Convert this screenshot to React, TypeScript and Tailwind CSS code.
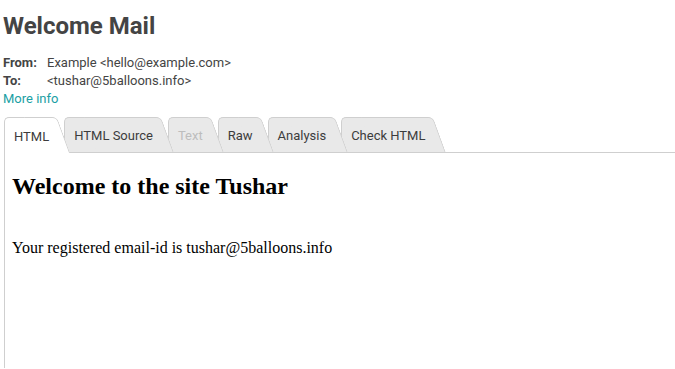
const TABS = [
  { label: "HTML", active: true, z: "z-[16]" },
  { label: "HTML Source", z: "z-[15]" },
  { label: "Text", disabled: true, z: "z-[14]" },
  { label: "Raw", z: "z-[13]" },
  { label: "Analysis", z: "z-[12]" },
  { label: "Check HTML", z: "z-[11]" },
];

function Tab({ label, active, disabled, z }: { label: string; active?: boolean; disabled?: boolean; z: string }) {
  const bg = active ? "bg-white" : "bg-[#e9e9e9]";
  return (
    <div
      className={`relative ${z} -mr-[6px] flex items-center pl-[10px] pr-[21px] pt-[3px] text-[13px] ${
        active ? "h-[36px] -mb-px" : "h-[35px]"
      } ${disabled ? "text-[#bdbdbd]" : "text-[#3c3c3c]"}`}
    >
      {/* tab shape: straight left part + skewed right part */}
      <div className={`absolute left-0 top-0 bottom-0 right-[20px] rounded-tl-[5px] border-l border-t border-[#cfcfcf] ${bg}`} />
      <div
        className={`absolute left-[20px] right-[13px] top-0 bottom-0 origin-top skew-x-[20deg] rounded-tr-[5px] border-r border-t border-[#cfcfcf] ${bg}`}
      />
      <span className="relative">{label}</span>
    </div>
  );
}

export default function App() {
  return (
    <div className="min-h-[369px] bg-white pl-[3px] font-['Roboto',sans-serif] text-[#444]">
      <h1 className="pt-[11px] text-[24px] font-bold leading-[30px] text-[#444]">Welcome Mail</h1>

      <div className="mt-[13px] text-[13px] leading-[18px]">
        <div className="flex">
          <span className="w-[44px] font-bold">From:</span>
          <span>Example &lt;hello@example.com&gt;</span>
        </div>
        <div className="flex">
          <span className="w-[44px] font-bold">To:</span>
          <span>&lt;tushar@5balloons.info&gt;</span>
        </div>
        <a className="block text-[#1ba0a4]">More info</a>
      </div>

      <div className="mt-[9px] flex h-[35px] items-end pl-px">
        {TABS.map((t) => (
          <Tab key={t.label} {...t} />
        ))}
      </div>

      <div className="ml-px h-[216px] border-l border-t border-[#cfcfcf] px-[7px] font-['Liberation_Serif',serif] text-black">
        <h2 className="mt-[19px] text-[24px] font-bold leading-[28px]">Welcome to the site Tushar</h2>
        <p className="mt-[38px] text-[16px] leading-[20px]">Your registered email-id is tushar@5balloons.info</p>
      </div>
    </div>
  );
}
